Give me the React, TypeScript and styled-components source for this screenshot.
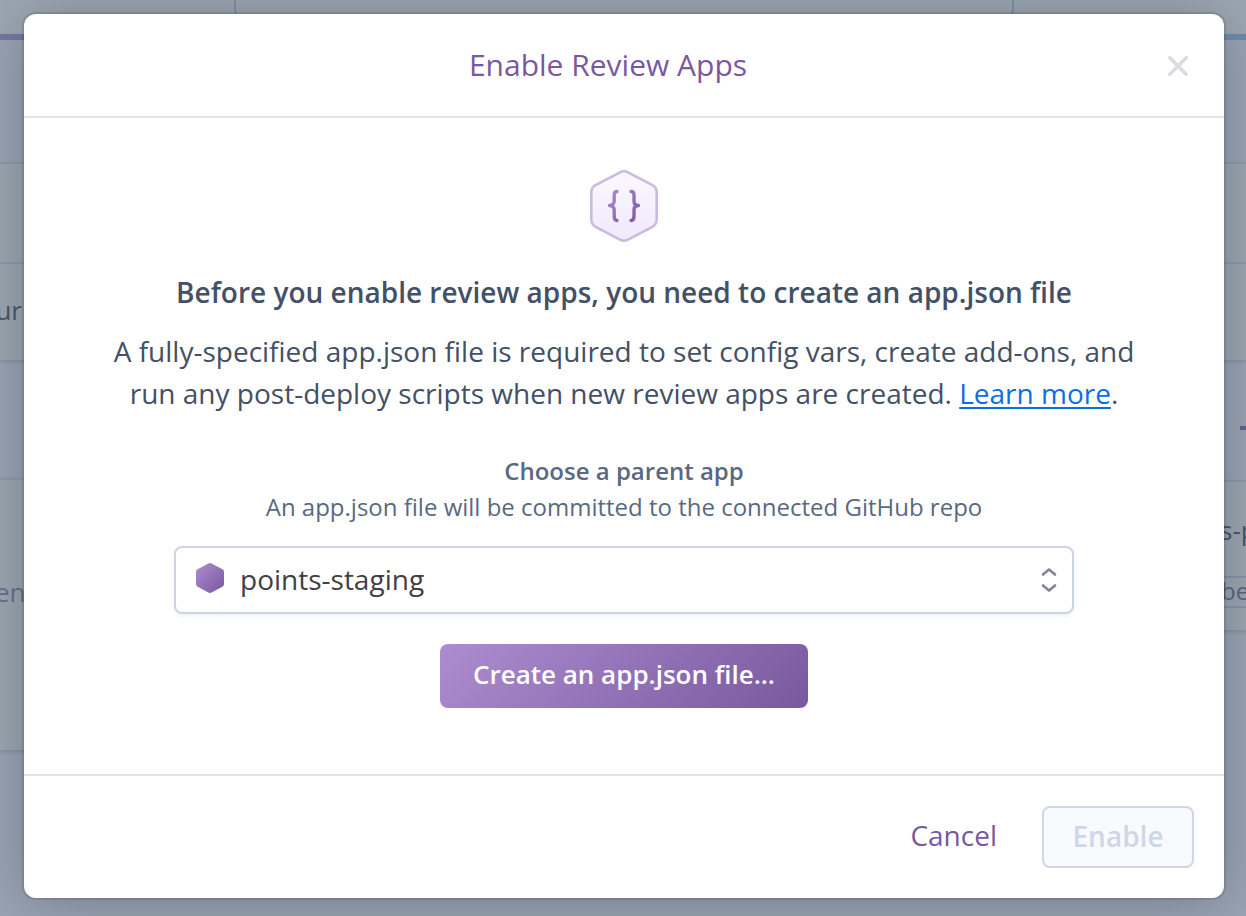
import React from 'react';
import styled, { createGlobalStyle } from 'styled-components';

const GlobalStyle = createGlobalStyle`
  *, *::before, *::after { box-sizing: border-box; }
  body {
    margin: 0;
    background: #9ba5b5;
    font-family: 'Open Sans', 'Noto Sans', sans-serif;
    color: #435065;
  }
  h1, h2, p { margin: 0; }
  button, select { font-family: inherit; }
`;

const Page = styled.div`
  position: relative;
  display: flex;
  flex-direction: column;
  min-height: 100vh;
  overflow: hidden;
`;

/* Dimmed pipeline page behind the dialog */
const Backdrop = styled.div`
  position: absolute;
  inset: 0;
  display: flex;
  flex-direction: column;
  overflow: hidden;
`;

const SearchBar = styled.div`
  flex: none;
  height: 34px;
  padding: 0 232px 0 234px;
  background: #9da8b3;
`;

const SearchField = styled.div`
  height: 18px;
  border: solid #8191ab;
  border-width: 0 2px 2px;
  border-radius: 0 0 8px 8px;
`;

const Stages = styled.div`
  flex: 1;
  display: flex;
  justify-content: space-between;
`;

const Stage = styled.div<{ $accent: string }>`
  width: 48px;
  border-top: 6px solid ${(p) => p.$accent};
  overflow: hidden;
`;

const StageGap = styled.div<{ $height: number }>`
  display: flex;
  justify-content: flex-end;
  align-items: center;
  height: ${(p) => p.$height}px;
`;

const Dash = styled.span`
  width: 6px;
  height: 4px;
  margin-top: 16px;
  background: #67628f;
`;

const Card = styled.div<{ $height: number; $top?: number; $last?: boolean }>`
  display: flex;
  flex-direction: column;
  height: ${(p) => p.$height}px;
  padding-top: ${(p) => p.$top ?? 0}px;
  border-top: 2px solid #909cac;
  background: #9da8b3;
  box-shadow: ${(p) => (p.$last ? '0 2px 3px rgba(60, 72, 96, 0.2)' : 'none')};
  white-space: nowrap;
`;

const CardText = styled.span<{ $muted?: boolean; $end?: number }>`
  align-self: ${(p) => (p.$end === undefined ? 'flex-start' : 'flex-end')};
  padding: 0 ${(p) => p.$end ?? 0}px 0 22px;
  font-size: 26px;
  line-height: 36px;
  color: ${(p) => (p.$muted ? '#64738e' : '#4b576b')};
`;

const Tag = styled.span`
  height: 32px;
  margin-top: 28px;
  padding-left: 23px;
  border: solid #8797b0;
  border-width: 2px 0;
  font-size: 24px;
  line-height: 26px;
  color: #59667e;
`;

const Dialog = styled.section`
  position: relative;
  display: flex;
  flex-direction: column;
  margin: 14px 22px 18px 24px;
  border-radius: 12px;
  background: #fff;
  box-shadow: 0 0 0 2px rgba(0, 0, 0, 0.1), 0 4px 60px rgba(20, 30, 40, 0.3);
`;

const DialogHeader = styled.header`
  display: flex;
  align-items: center;
  height: 104px;
  padding: 0 36px 0 24px;
  border-bottom: 2px solid #e3e3e4;
`;

const Title = styled.h1`
  flex: 1;
  font-size: 30px;
  font-weight: 400;
  line-height: 42px;
  text-align: center;
  color: #79589f;
`;

const CloseButton = styled.button`
  display: flex;
  padding: 2px 0 0;
  border: 0;
  background: none;
  cursor: pointer;
`;

const DialogBody = styled.div`
  display: flex;
  flex-direction: column;
  align-items: center;
  padding: 52px 80px 66px;
  text-align: center;
`;

const Heading = styled.h2`
  margin-top: 29px;
  font-size: 28px;
  font-weight: 600;
  line-height: 42px;
`;

const Lead = styled.p`
  margin-top: 17px;
  font-size: 28px;
  line-height: 42px;
`;

const Link = styled.a`
  color: #0a6ee6;
  text-decoration: underline;
  text-decoration-thickness: 2px;
  text-underline-offset: 3px;
`;

const Label = styled.label`
  margin-top: 39px;
  font-size: 24px;
  font-weight: 600;
  line-height: 36px;
  color: #596981;
`;

const Hint = styled.p`
  font-size: 24px;
  line-height: 36px;
  color: #596981;
`;

const SelectBox = styled.div`
  position: relative;
  width: 100%;
  max-width: 900px;
  margin-top: 21px;
`;

const Select = styled.select`
  display: block;
  width: 100%;
  height: 68px;
  padding: 0 64px 2px;
  border: 2px solid #cbd5e6;
  border-radius: 8px;
  background: #fff;
  box-shadow: 0 2px 4px rgba(0, 0, 0, 0.06);
  appearance: none;
  font-size: 28px;
  color: #3f3f44;
`;

const AppIcon = styled.svg`
  position: absolute;
  left: 22px;
  top: 17px;
  pointer-events: none;
`;

const SelectArrows = styled.svg`
  position: absolute;
  right: 16px;
  top: 20px;
  pointer-events: none;
`;

const CreateButton = styled.button`
  height: 64px;
  margin-top: 30px;
  padding: 0 33px 4px;
  border: 0;
  border-radius: 8px;
  background: linear-gradient(135deg, #ad8dcf, #79589f);
  font-size: 26px;
  font-weight: 600;
  color: #fff;
  cursor: pointer;
`;

const DialogFooter = styled.footer`
  display: flex;
  justify-content: flex-end;
  align-items: center;
  gap: 45px;
  padding: 30px;
  border-top: 2px solid #e3e3e4;
`;

const CancelButton = styled.button`
  padding: 0 0 4px;
  border: 0;
  background: none;
  font-size: 28px;
  line-height: 42px;
  color: #79589f;
  cursor: pointer;
`;

const EnableButton = styled.button`
  width: 152px;
  height: 62px;
  padding: 0 0 2px;
  border: 2px solid #cfd7e6;
  border-radius: 8px;
  background: #f9fafd;
  font-size: 28px;
  font-weight: 600;
  color: #cfd7e6;
`;

const AppJsonIcon = () => (
  <svg width="68" height="72" viewBox="0 0 68 72" fill="none" aria-hidden="true">
    <defs>
      <linearGradient id="hexFill" x1="0" y1="0" x2="0" y2="1">
        <stop offset="0" stopColor="#fbf9fe" />
        <stop offset="1" stopColor="#f0e8fd" />
      </linearGradient>
      <linearGradient id="braces" x1="18" y1="20" x2="50" y2="52" gradientUnits="userSpaceOnUse">
        <stop offset="0" stopColor="#ad8dcf" />
        <stop offset="1" stopColor="#79589f" />
      </linearGradient>
    </defs>
    <path
      d="M30 2.4Q34 .2 38 2.4L62.5 15.2Q66.7 17.6 66.7 22.5V49.5Q66.7 54.4 62.5 56.8L38 69.6Q34 71.8 30 69.6L5.5 56.8Q1.3 54.4 1.3 49.5V22.5Q1.3 17.6 5.500 15.200Z"
      fill="url(#hexFill)"
      stroke="#cbbbdd"
      strokeWidth="2.6"
    />
    <path
      d="M27 21.500C25 21.500 24.200 23 24.200 25V31C24.200 33.500 22.500 35.500 19.500 35.500C22.500 35.500 24.200 37.500 24.200 40V46C24.200 48.500 25 50.500 27 50.500M41 21.500C43.200 21.500 44 23 44 25V31C44 33.500 45.500 35.500 48.500 35.500C45.500 35.500 44 37.500 44 40V46C44 48.500 43.200 50.500 41 50.500"
      stroke="url(#braces)"
      strokeWidth="3.4"
      strokeLinecap="round"
      strokeLinejoin="round"
    />
  </svg>
);

const App = () => (
  <Page>
    <GlobalStyle />
    <Backdrop aria-hidden="true">
      <SearchBar>
        <SearchField />
      </SearchBar>
      <Stages>
        <Stage $accent="#7779a4">
          <StageGap $height={122} />
          <Card $height={100} />
          <Card $height={98} $top={28} $last>
            <CardText $end={26}>our</CardText>
          </Card>
          <StageGap $height={118} />
          <Card $height={272} $top={94} $last>
            <CardText $muted $end={10}>enc</CardText>
          </Card>
        </Stage>
        <Stage $accent="#6e8db0">
          <StageGap $height={122} />
          <Card $height={100} />
          <Card $height={98} $last />
          <StageGap $height={120}>
            <Dash />
          </StageGap>
          <Card $height={150} $top={30} $last>
            <CardText>s-pro</CardText>
            <Tag>beta</Tag>
          </Card>
        </Stage>
      </Stages>
    </Backdrop>

    <Dialog role="dialog" aria-modal="true" aria-labelledby="dialog-title">
      <DialogHeader>
        <Title id="dialog-title">Enable Review Apps</Title>
        <CloseButton type="button" aria-label="Close">
          <svg width="20" height="20" viewBox="0 0 20 20" aria-hidden="true">
            <path d="M1.800 1.800L18.200 18.200M18.200 1.800L1.800 18.200" stroke="#d9dce1" strokeWidth="3.500" strokeLinecap="round" />
          </svg>
        </CloseButton>
      </DialogHeader>

      <DialogBody>
        <AppJsonIcon />
        <Heading>Before you enable review apps, you need to create an app.json file</Heading>
        <Lead>
          A fully-specified app.json file is required to set config vars, create add-ons, and run any
          post-deploy scripts when new review apps are created. <Link href="#learn-more">Learn more</Link>.
        </Lead>
        <Label htmlFor="parent-app">Choose a parent app</Label>
        <Hint id="parent-app-hint">An app.json file will be committed to the connected GitHub repo</Hint>
        <SelectBox>
          <Select id="parent-app" aria-describedby="parent-app-hint" defaultValue="points-staging">
            <option value="points-staging">points-staging</option>
          </Select>
          <AppIcon width="28" height="30" viewBox="0 0 28 30" aria-hidden="true">
            <defs>
              <linearGradient id="appHex" x1="0" y1="0" x2="1" y2="1">
                <stop offset="0" stopColor="#ad8dcf" />
                <stop offset="1" stopColor="#79589f" />
              </linearGradient>
            </defs>
            <path
              d="M12.400.4Q14-.4 15.600.4L26.400 6.200Q28 7.200 28 9V21Q28 22.800 26.400 23.800L15.600 29.600Q14 30.400 12.400 29.600L1.600 23.800Q0 22.800 0 21V9Q0 7.200 1.600 6.200Z"
              fill="url(#appHex)"
            />
          </AppIcon>
          <SelectArrows width="18" height="28" viewBox="0 0 18 28" fill="none" aria-hidden="true">
            <path
              d="M3 8.500L9 3.500L15 8.500M3 19.500L9 24.500L15 19.500"
              stroke="#84819a"
              strokeWidth="2.600"
              strokeLinecap="round"
              strokeLinejoin="round"
            />
          </SelectArrows>
        </SelectBox>
        <CreateButton type="button">Create an app.json file...</CreateButton>
      </DialogBody>

      <DialogFooter>
        <CancelButton type="button">Cancel</CancelButton>
        <EnableButton type="button" disabled>Enable</EnableButton>
      </DialogFooter>
    </Dialog>
  </Page>
);

export default App;
